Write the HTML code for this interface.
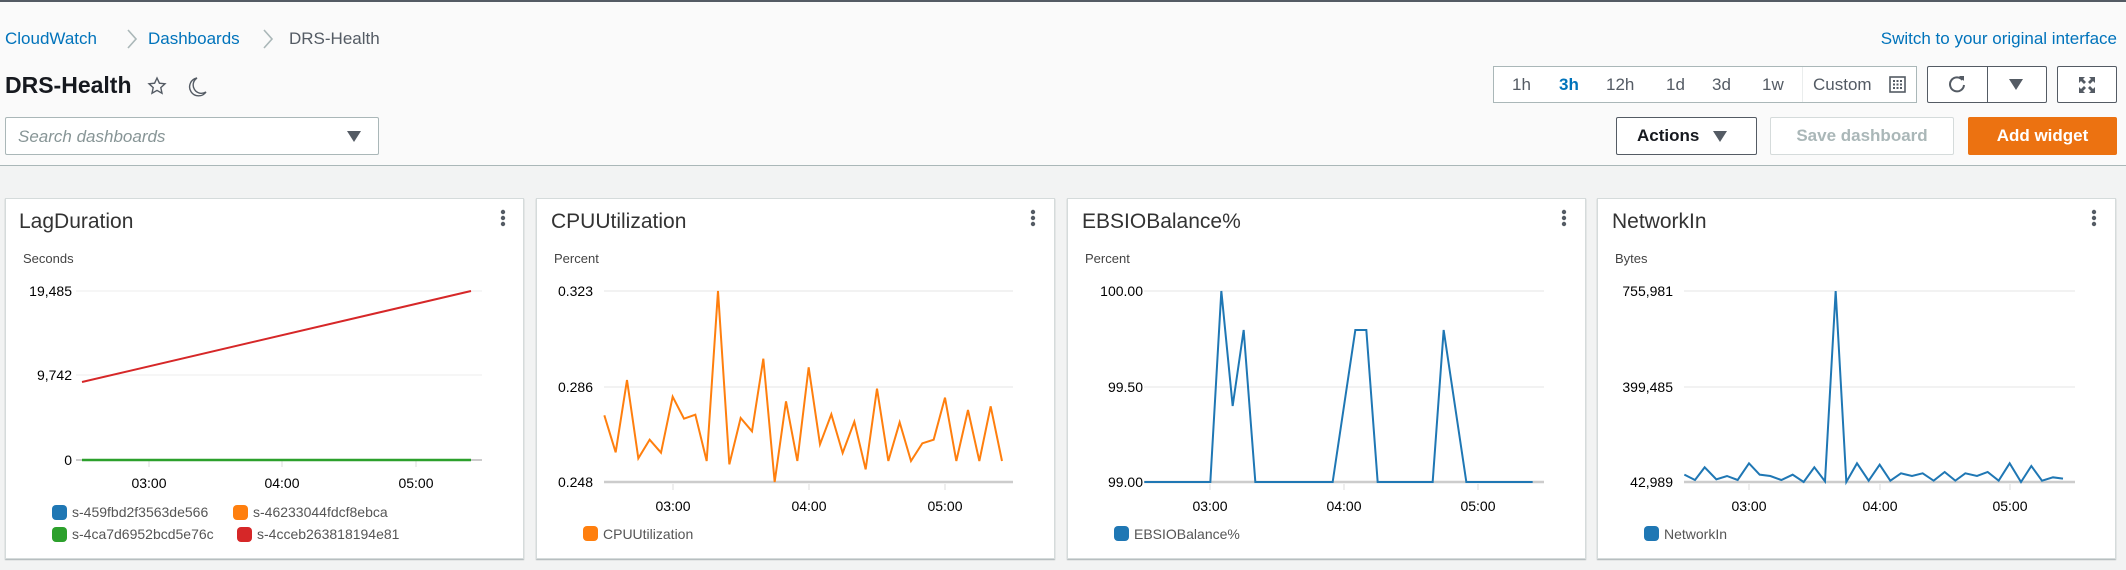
<!DOCTYPE html>
<html><head><meta charset="utf-8"><style>
*{box-sizing:border-box;margin:0;padding:0}
body{width:2126px;height:570px;background:#f2f3f3;font-family:"Liberation Sans",sans-serif;position:relative;overflow:hidden}
.hdr{position:absolute;left:0;top:0;width:2126px;height:166px;background:#fafafa;border-top:2px solid #545b64;border-bottom:1px solid #aab7b8}
.a{position:absolute;white-space:nowrap}
.lnk{color:#0073bb;font-size:17px}
.btn{position:absolute;height:36px;border:1px solid #545b64;border-radius:2px;background:#fff;display:flex;align-items:center;justify-content:center;font-weight:bold;font-size:17px;color:#545b64}
.card{position:absolute;top:198px;width:519px;height:361px;background:#fff;border:1px solid #d5dbdb;box-shadow:0 1px 1px rgba(0,28,36,.3)}
.t{font-size:14px;fill:#000}
</style></head><body>
<div class="hdr">
 <div class="a lnk" style="left:5px;top:27px">CloudWatch</div>
 <svg class="a" style="left:126px;top:26px" width="12" height="22" viewBox="0 0 12 22"><path d="M2 2l8 9-8 9" fill="none" stroke="#aab7b8" stroke-width="1.6"/></svg>
 <div class="a lnk" style="left:148px;top:27px">Dashboards</div>
 <svg class="a" style="left:262px;top:26px" width="12" height="22" viewBox="0 0 12 22"><path d="M2 2l8 9-8 9" fill="none" stroke="#aab7b8" stroke-width="1.6"/></svg>
 <div class="a" style="left:289px;top:27px;font-size:17px;color:#545b64">DRS-Health</div>
 <div class="a lnk" style="right:9px;top:27px">Switch to your original interface</div>
 <div class="a" style="left:5px;top:70px;font-size:23px;font-weight:bold;color:#16191f">DRS-Health</div>
 <svg class="a" style="left:147px;top:74px" width="20" height="20" viewBox="0 0 20 20"><path d="M10 2l2.4 5.2 5.6.6-4.2 3.8 1.2 5.6L10 14.4 5 17.2l1.2-5.6L2 7.8l5.6-.6z" fill="none" stroke="#545b64" stroke-width="1.4"/></svg>
 <svg class="a" style="left:188px;top:74px" width="20" height="22" viewBox="0 0 20 22"><path d="M9 2A9 9 0 1 0 18 16 7 7 0 0 1 9 2z" fill="none" stroke="#545b64" stroke-width="1.4"/></svg>
 <div class="a" style="left:1493px;top:64px;width:424px;height:37px;border:1px solid #aab7b8;background:#fff;font-size:17px;color:#545b64">
  <span class="a" style="left:18px;top:8px">1h</span>
  <span class="a" style="left:65px;top:8px;color:#0073bb;font-weight:bold">3h</span>
  <span class="a" style="left:112px;top:8px">12h</span>
  <span class="a" style="left:172px;top:8px">1d</span>
  <span class="a" style="left:218px;top:8px">3d</span>
  <span class="a" style="left:268px;top:8px">1w</span>
  <span class="a" style="left:308px;top:0;width:1px;height:35px;background:#eaeded"></span>
  <span class="a" style="left:319px;top:8px">Custom</span>
  <svg class="a" style="left:395px;top:9px" width="17" height="17" viewBox="0 0 17 17"><rect x="1" y="1" width="15" height="15" fill="none" stroke="#545b64" stroke-width="1.6"/><g fill="#545b64"><rect x="4" y="4" width="2" height="2"/><rect x="7.5" y="4" width="2" height="2"/><rect x="11" y="4" width="2" height="2"/><rect x="4" y="7.5" width="2" height="2"/><rect x="7.5" y="7.5" width="2" height="2"/><rect x="11" y="7.5" width="2" height="2"/><rect x="4" y="11" width="2" height="2"/><rect x="7.5" y="11" width="2" height="2"/><rect x="11" y="11" width="2" height="2"/></g></svg>
 </div>
 <div class="btn" style="left:1927px;top:64px;width:120px;height:37px"></div>
 <div class="a" style="left:1987px;top:64px;width:1px;height:37px;background:#545b64"></div>
 <svg class="a" style="left:1947px;top:72px" width="20" height="20" viewBox="0 0 20 20"><path d="M15.5 6A7 7 0 1 0 17 11" fill="none" stroke="#545b64" stroke-width="2"/><path d="M12 2l5 0 0 5z" fill="#545b64"/></svg>
 <svg class="a" style="left:2009px;top:77px" width="14" height="11"><path d="M0 0h14L7 11z" fill="#545b64"/></svg>
 <div class="btn" style="left:2057px;top:64px;width:60px;height:37px"><svg width="18" height="18" viewBox="0 0 18 18" fill="#545b64"><path d="M1 1h6L5 3l3 3-2 2-3-3-2 2zM17 1v6l-2-2-3 3-2-2 3-3-2-2zM1 17v-6l2 2 3-3 2 2-3 3 2 2zM17 17h-6l2-2-3-3 2-2 3 3 2-2z"/></svg></div>
 <div class="a" style="left:5px;top:115px;width:374px;height:38px;border:1px solid #aab7b8;border-radius:2px;background:#fff">
  <span class="a" style="left:12px;top:9px;font-size:17px;font-style:italic;color:#879596">Search dashboards</span>
  <svg class="a" style="left:341px;top:13px" width="14" height="11"><path d="M0 0h14L7 11z" fill="#545b64"/></svg>
 </div>
 <div class="btn" style="left:1616px;top:115px;width:141px;height:38px;color:#16191f;justify-content:flex-start;padding-left:20px">Actions<svg style="margin-left:14px" width="14" height="11"><path d="M0 0h14L7 11z" fill="#545b64"/></svg></div>
 <div class="btn" style="left:1770px;top:115px;width:184px;height:38px;border-color:#d5dbdb;color:#aab7b8">Save dashboard</div>
 <div class="btn" style="left:1968px;top:115px;width:149px;height:38px;border-color:#ec7211;background:#ec7211;color:#fff">Add widget</div>
</div>

<div class="card" style="left:5px"></div>
<div class="card" style="left:536px"></div>
<div class="card" style="left:1067px"></div>
<div class="card" style="left:1597px"></div>

<svg class="a" style="left:0;top:0" width="2126" height="570" font-family="Liberation Sans, sans-serif">
 <g font-size="21" fill="#333">
  <text x="19" y="228">LagDuration</text>
  <text x="551" y="228">CPUUtilization</text>
  <text x="1082" y="228">EBSIOBalance%</text>
  <text x="1612" y="228">NetworkIn</text>
 </g>
 <g fill="#545b64">
  <circle cx="503" cy="212" r="2.2"/><circle cx="503" cy="218" r="2.2"/><circle cx="503" cy="224" r="2.2"/>
  <circle cx="1033" cy="212" r="2.2"/><circle cx="1033" cy="218" r="2.2"/><circle cx="1033" cy="224" r="2.2"/>
  <circle cx="1564" cy="212" r="2.2"/><circle cx="1564" cy="218" r="2.2"/><circle cx="1564" cy="224" r="2.2"/>
  <circle cx="2094" cy="212" r="2.2"/><circle cx="2094" cy="218" r="2.2"/><circle cx="2094" cy="224" r="2.2"/>
 </g>
 <g font-size="13" fill="#444">
  <text x="23" y="263">Seconds</text><text x="554" y="263">Percent</text><text x="1085" y="263">Percent</text><text x="1615" y="263">Bytes</text>
 </g>
 <g stroke="#eee" stroke-width="1"><line x1="76" y1="291" x2="482" y2="291"/><line x1="76" y1="375" x2="482" y2="375"/></g>
 <line x1="76" y1="460" x2="482" y2="460" stroke="#ccc" stroke-width="2"/>
 <g stroke="#ddd"><line x1="149" y1="461" x2="149" y2="467"/><line x1="282" y1="461" x2="282" y2="467"/><line x1="416" y1="461" x2="416" y2="467"/></g>
 <g class="t" text-anchor="end" font-size="14"><text x="72" y="296">19,485</text><text x="72" y="380">9,742</text><text x="72" y="465">0</text></g>
 <g font-size="14" text-anchor="middle"><text x="149" y="488">03:00</text><text x="282" y="488">04:00</text><text x="416" y="488">05:00</text></g>
 <line x1="82" y1="382" x2="471" y2="291" stroke="#d62728" stroke-width="2"/>
 <line x1="82" y1="460" x2="471" y2="460" stroke="#2ca02c" stroke-width="2.5"/>
 <rect x="52" y="505" width="15" height="15" rx="4" fill="#1f77b4"/><rect x="233" y="505" width="15" height="15" rx="4" fill="#ff7f0e"/>
 <rect x="52" y="527" width="15" height="15" rx="4" fill="#2ca02c"/><rect x="237" y="527" width="15" height="15" rx="4" fill="#d62728"/>
 <g font-size="14" fill="#555"><text x="72" y="517">s-459fbd2f3563de566</text><text x="253" y="517">s-46233044fdcf8ebca</text><text x="72" y="539">s-4ca7d6952bcd5e76c</text><text x="257" y="539">s-4cceb263818194e81</text></g>

 <g stroke="#eee" stroke-width="1.5">
  <line x1="604" y1="291" x2="1013" y2="291"/><line x1="604" y1="387" x2="1013" y2="387"/>
  <line x1="1144" y1="291" x2="1544" y2="291"/><line x1="1144" y1="387" x2="1544" y2="387"/>
  <line x1="1684" y1="291" x2="2075" y2="291"/><line x1="1684" y1="387" x2="2075" y2="387"/>
 </g>
 <g stroke="#ccc" stroke-width="2.5">
  <line x1="604" y1="482" x2="1013" y2="482"/><line x1="1144" y1="482" x2="1544" y2="482"/><line x1="1684" y1="482" x2="2075" y2="482"/>
 </g>
 <g stroke="#ddd">
  <line x1="673" y1="484" x2="673" y2="490"/><line x1="809" y1="484" x2="809" y2="490"/><line x1="945" y1="484" x2="945" y2="490"/>
  <line x1="1210" y1="484" x2="1210" y2="490"/><line x1="1344" y1="484" x2="1344" y2="490"/><line x1="1478" y1="484" x2="1478" y2="490"/>
  <line x1="1749" y1="484" x2="1749" y2="490"/><line x1="1880" y1="484" x2="1880" y2="490"/><line x1="2010" y1="484" x2="2010" y2="490"/>
 </g>
 <g font-size="14" text-anchor="end" fill="#000">
  <text x="593" y="296">0.323</text><text x="593" y="392">0.286</text><text x="593" y="487">0.248</text>
  <text x="1143" y="296">100.00</text><text x="1143" y="392">99.50</text><text x="1143" y="487">99.00</text>
  <text x="1673" y="296">755,981</text><text x="1673" y="392">399,485</text><text x="1673" y="487">42,989</text>
 </g>
 <g font-size="14" text-anchor="middle" fill="#000">
  <text x="673" y="511">03:00</text><text x="809" y="511">04:00</text><text x="945" y="511">05:00</text>
  <text x="1210" y="511">03:00</text><text x="1344" y="511">04:00</text><text x="1478" y="511">05:00</text>
  <text x="1749" y="511">03:00</text><text x="1880" y="511">04:00</text><text x="2010" y="511">05:00</text>
 </g>
 <g transform="translate(536,270) scale(0.33333)">
  <polyline fill="none" stroke="#ff7f0e" stroke-width="2" vector-effect="non-scaling-stroke" points="205,436 239,547 273,330 307,565 341,509 375,548 410,380 444,446 478,434 512,573 546,63 580,583 614,444 648,484 682,266 716,636 750,394 784,573 818,292 852,523 886,433 920,549 955,455 989,598 1023,356 1057,573 1091,457 1125,573 1159,520 1193,509 1227,383 1261,573 1296,420 1330,573 1364,409 1398,573"/>
 </g>
 <g transform="translate(1067,270) scale(0.33333)">
  <polyline fill="none" stroke="#1f77b4" stroke-width="2" vector-effect="non-scaling-stroke" points="232,636 430,636 463,63 497,408 530,180 565,636 797,636 865,180 898,180 932,636 1097,636 1130,180 1198,636 1397,636"/>
 </g>
 <g transform="translate(1597,270) scale(0.33333)">
  <polyline fill="none" stroke="#1f77b4" stroke-width="2" vector-effect="non-scaling-stroke" points="262,614 294,630 323,592 358,628 390,618 422,630 456,580 488,614 520,618 553,630 587,614 620,636 652,592 684,634 716,63 748,636 780,580 815,632 848,584 880,632 912,610 945,618 977,610 1010,632 1043,606 1075,632 1105,610 1140,618 1172,606 1205,632 1238,580 1272,636 1303,588 1335,632 1368,622 1398,626"/>
 </g>
 <rect x="583" y="526" width="15" height="15" rx="4" fill="#ff7f0e"/>
 <rect x="1114" y="526" width="15" height="15" rx="4" fill="#1f77b4"/>
 <rect x="1644" y="526" width="15" height="15" rx="4" fill="#1f77b4"/>
 <g font-size="14" fill="#555"><text x="603" y="539">CPUUtilization</text><text x="1134" y="539">EBSIOBalance%</text><text x="1664" y="539">NetworkIn</text></g>
</svg>
</body></html>
